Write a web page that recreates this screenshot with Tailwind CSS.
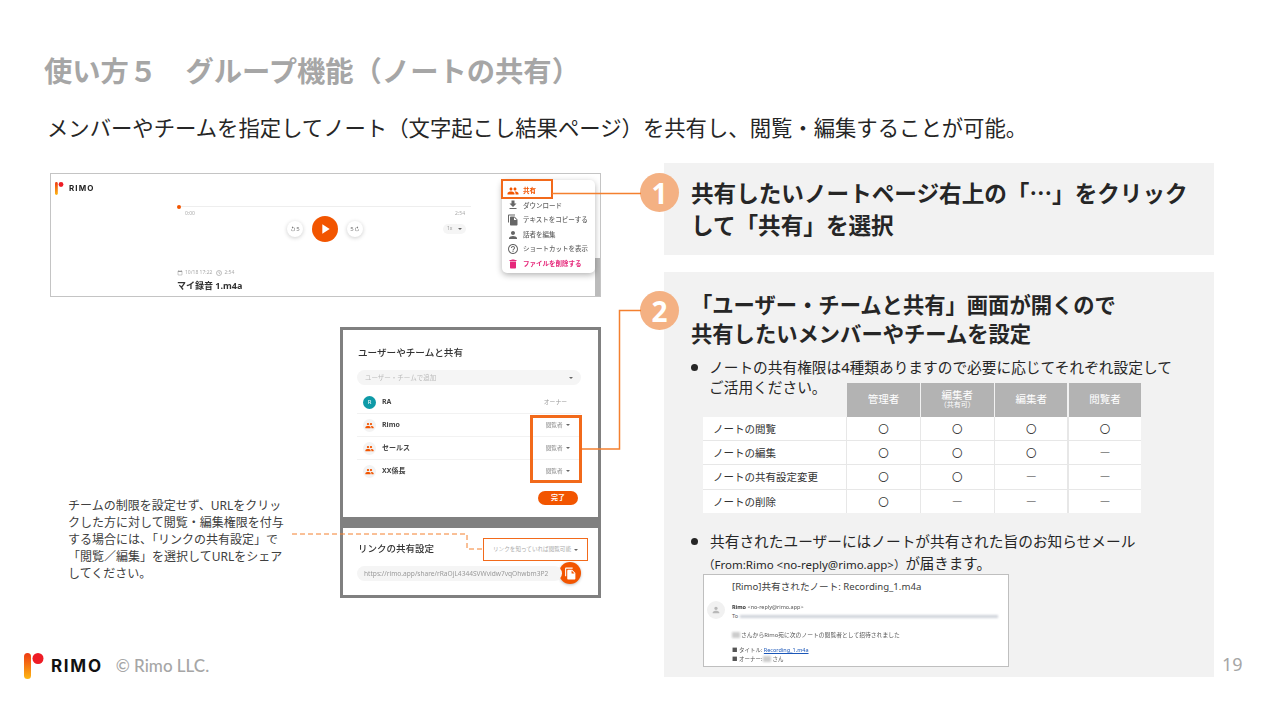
<!DOCTYPE html>
<html lang="ja">
<head>
<meta charset="UTF-8">
<title>使い方5 グループ機能</title>
<script src="https://cdn.jsdelivr.net/npm/@tailwindcss/browser@4"></script>
</head>
<body class="bg-white font-['Noto_Sans','Noto_Sans_CJK_JP',sans-serif]">
<div class="relative w-[1267px] h-[707px] overflow-hidden bg-white">

  <!-- Title -->
  <h1 class="ml-[44px] mt-[51px] h-[40px] text-[28.3px] leading-[40px] font-bold text-[#a6a6a6] whitespace-nowrap">使い方５　グループ機能（ノートの共有）</h1>
  <p class="ml-[47px] mt-[21px] h-[32px] text-[21.35px] leading-[32px] text-[#262626] whitespace-nowrap">メンバーやチームを指定してノート（文字起こし結果ページ）を共有し、閲覧・編集することが可能。</p>

  <div class="mt-[19px] flex h-[544px]">

    <!-- Left column -->
    <div class="w-[664px] pl-[50px] flex flex-col shrink-0">

      <!-- Player screenshot -->
      <div class="relative mt-[10px] w-[551px] h-[124px] border border-[#c4c4c4] bg-white overflow-hidden">
        <div class="blur-[0.3px]">
          <div class="flex items-center gap-[5px] h-[14px] mt-[7px] ml-[4px]">
            <svg width="9" height="13" viewBox="0 0 9 13"><defs><linearGradient id="lg1" x1="0" y1="0" x2="0" y2="1"><stop offset="0" stop-color="#ee3a12"/><stop offset="1" stop-color="#fdb813"/></linearGradient></defs><rect x="0" y="0" width="2.8" height="13" rx="1.4" fill="url(#lg1)"/><circle cx="6" cy="2.5" r="2.4" fill="#ee1c25"/></svg>
            <span class="font-['Inter',sans-serif] text-[8px] font-bold tracking-[1.1px] text-[#222]">RIMO</span>
          </div>
          <div class="ml-[128px] w-[292px] mt-[11px]">
            <div class="relative h-[1px] mt-[1px] bg-[#eeeeee]"><span class="absolute -left-[2px] -top-[1.5px] size-[4px] rounded-full bg-[#f25500]"></span></div>
            <div class="flex justify-between px-[6px] mt-[2px] h-[8px] text-[5px] leading-[8px] text-[#aaa]"><span>0:00</span><span>2:54</span></div>
            <div class="grid grid-cols-[1fr_auto_1fr] items-center -mt-[1px]">
              <span></span>
              <div class="flex items-center gap-[9px]">
                <span class="flex items-center justify-center size-[16px] rounded-full bg-white shadow-[0_1px_4px_rgba(0,0,0,0.2)] text-[6px] text-[#777]"><svg width="6" height="6" viewBox="0 0 24 24" fill="#777"><path d="M12 5V1L7 6l5 5V7c3.31 0 6 2.69 6 6s-2.69 6-6 6-6-2.69-6-6H4c0 4.42 3.58 8 8 8s8-3.58 8-8-3.58-8-8-8z"/></svg>5</span>
                <span class="flex items-center justify-center size-[26px] rounded-full bg-[#f25500]"><svg width="16" height="16" viewBox="0 0 24 24" fill="#fff"><path d="M8 5v14l11-7z"/></svg></span>
                <span class="flex items-center justify-center size-[16px] rounded-full bg-white shadow-[0_1px_4px_rgba(0,0,0,0.2)] text-[6px] text-[#777]">5<svg class="-scale-x-100" width="6" height="6" viewBox="0 0 24 24" fill="#777"><path d="M12 5V1L7 6l5 5V7c3.31 0 6 2.69 6 6s-2.69 6-6 6-6-2.69-6-6H4c0 4.42 3.58 8 8 8s8-3.58 8-8-3.58-8-8-8z"/></svg></span>
              </div>
              <span class="justify-self-end mr-[5px] flex items-center justify-between w-[23px] h-[10px] px-[4px] rounded-full bg-[#f5f5f5] text-[5px] text-[#999]">1x<i class="border-x-[2px] border-t-[2.5px] border-x-transparent border-t-[#666]"></i></span>
            </div>
          </div>
          <div class="ml-[126px] mt-[27px] flex items-center h-[8px] text-[5px] text-[#aaa]">
            <svg width="6" height="6" viewBox="0 0 24 24" fill="#999"><path d="M19 3h-1V1h-2v2H8V1H6v2H5c-1.1 0-2 .9-2 2v14c0 1.1.9 2 2 2h14c1.1 0 2-.9 2-2V5c0-1.1-.9-2-2-2zm0 16H5V8h14v11z"/></svg>
            <span class="ml-[2px]">10/18 17:22</span>
            <svg class="ml-[4px]" width="6" height="6" viewBox="0 0 24 24" fill="none" stroke="#999" stroke-width="2.5"><circle cx="12" cy="12" r="10"/><path d="M12 6v6l4 3"/></svg>
            <span class="ml-[2px]">2:54</span>
          </div>
          <div class="ml-[126px] mt-[3px] text-[9px] leading-[12px] font-bold text-[#333]">マイ録音 1.m4a</div>
        </div>

        <!-- scrollbar behind the menu -->
        <div class="absolute right-0 top-[84px] w-[5px] h-[40px] bg-[#bbbbbb]"></div>

        <!-- Context menu -->
        <div class="absolute left-[451px] top-[6px] w-[93px] h-[93px] pt-[3.5px] rounded-[5px] bg-white shadow-[0_2px_6px_rgba(0,0,0,0.3)] text-[6.5px] font-medium text-[#666] blur-[0.25px]">
          <div class="flex items-center gap-[4px] pl-[5px] h-[14.6px] font-bold text-[#f25500]"><svg width="12" height="12" viewBox="0 0 24 24" fill="#f25500"><path d="M16 11c1.66 0 2.99-1.34 2.99-3S17.66 5 16 5c-1.66 0-3 1.34-3 3s1.34 3 3 3zm-8 0c1.66 0 2.99-1.34 2.99-3S9.66 5 8 5C6.34 5 5 6.34 5 8s1.34 3 3 3zm0 2c-2.33 0-7 1.17-7 3.5V19h14v-2.5c0-2.33-4.67-3.5-7-3.5zm8 0c-.29 0-.62.02-.97.05 1.16.84 1.97 1.97 1.97 3.45V19h6v-2.5c0-2.33-4.67-3.5-7-3.5z"/></svg>共有</div>
          <div class="flex items-center gap-[4px] pl-[5px] h-[14.6px]"><svg width="12" height="12" viewBox="0 0 24 24" fill="#666"><path d="M19 9h-4V3H9v6H5l7 7 7-7zM5 18v2h14v-2H5z"/></svg>ダウンロード</div>
          <div class="flex items-center gap-[4px] pl-[5px] h-[14.6px]"><svg width="12" height="12" viewBox="0 0 24 24" fill="#666"><path d="M16 1H4c-1.1 0-2 .9-2 2v14h2V3h12V1zm-1 4l6 6v10c0 1.1-.9 2-2 2H7.99C6.89 23 6 22.1 6 21l.01-14c0-1.1.89-2 1.99-2h7zm-1 7h5.5L14 6.5V12z"/></svg>テキストをコピーする</div>
          <div class="flex items-center gap-[4px] pl-[5px] h-[14.6px]"><svg width="12" height="12" viewBox="0 0 24 24" fill="#666"><path d="M12 12c2.21 0 4-1.79 4-4s-1.79-4-4-4-4 1.79-4 4 1.79 4 4 4zm0 2c-2.67 0-8 1.34-8 4v2h16v-2c0-2.66-5.33-4-8-4z"/></svg>話者を編集</div>
          <div class="flex items-center gap-[4px] pl-[5px] h-[14.6px]"><svg width="12" height="12" viewBox="0 0 24 24" fill="#666"><path d="M11 18h2v-2h-2v2zm1-16C6.48 2 2 6.48 2 12s4.48 10 10 10 10-4.48 10-10S17.52 2 12 2zm0 18c-4.41 0-8-3.59-8-8s3.59-8 8-8 8 3.59 8 8-3.59 8-8 8zm0-14c-2.21 0-4 1.79-4 4h2c0-1.1.9-2 2-2s2 .9 2 2c0 2-3 1.75-3 5h2c0-2.25 3-2.5 3-5 0-2.21-1.79-4-4-4z"/></svg>ショートカットを表示</div>
          <div class="flex items-center gap-[4px] pl-[5px] h-[14.6px] font-bold text-[#e6277a]"><svg width="12" height="12" viewBox="0 0 24 24" fill="#e6277a"><path d="M6 19c0 1.1.9 2 2 2h8c1.1 0 2-.9 2-2V7H6v12zM19 4h-3.5l-1-1h-5l-1 1H5v2h14V4z"/></svg>ファイルを削除する</div>
        </div>
        <div class="absolute left-[450px] top-[5px] w-[52px] h-[20px] border-2 border-[#f26a1b]"></div>
      </div>

      <div class="flex mt-[30px]">
        <!-- Note -->
        <p class="ml-[18px] mt-[170px] w-[218px] text-[12px] leading-[17px] text-[#404040] h-fit">チームの制限を設定せず、URLをクリックした方に対して閲覧・編集権限を付与する場合には、「リンクの共有設定」で「閲覧／編集」を選択してURLをシェアしてください。</p>

        <!-- Share dialog screenshot -->
        <div class="ml-[54px] w-[261px] h-[271px] p-[3px] bg-[#808080] flex flex-col gap-[11px] shrink-0">
          <div class="relative h-[187px] bg-white flex flex-col pt-[17px] pl-[14px]">
            <div class="pl-px h-[12px] text-[9.6px] leading-[12px] font-medium text-[#333] blur-[0.25px]">ユーザーやチームと共有</div>
            <div class="mt-[11px] w-[224px] h-[15px] rounded-full bg-[#f5f5f5] flex items-center justify-between px-[8px] text-[6.5px] text-[#bbb] blur-[0.25px]">ユーザー・チームで追加<i class="border-x-[2px] border-t-[2.5px] border-x-transparent border-t-[#666]"></i></div>
            <div class="mt-[6px] w-[224px] text-[7px] font-bold text-[#444] blur-[0.25px]">
              <div class="h-[23px] flex items-center justify-between pl-[6px] pr-[14px] border-b border-[#f2f2f2]">
                <span class="flex items-center gap-[6px]"><span class="flex items-center justify-center size-[13px] rounded-full bg-[#0e9aa7] text-white text-[6px] font-normal">R</span>RA</span>
                <span class="font-normal text-[5.8px] text-[#999]">オーナー</span>
              </div>
              <div class="h-[23px] flex items-center justify-between pl-[6px] pr-[11px] border-b border-[#f2f2f2]">
                <span class="flex items-center gap-[6px]"><span class="flex items-center justify-center size-[13px] rounded-full bg-[#f3f3f3]"><svg width="9" height="9" viewBox="0 0 24 24" fill="#f25500"><path d="M16 11c1.66 0 2.99-1.34 2.99-3S17.66 5 16 5c-1.66 0-3 1.34-3 3s1.34 3 3 3zm-8 0c1.66 0 2.99-1.34 2.99-3S9.66 5 8 5C6.34 5 5 6.34 5 8s1.34 3 3 3zm0 2c-2.33 0-7 1.17-7 3.5V19h14v-2.5c0-2.33-4.67-3.5-7-3.5zm8 0c-.29 0-.62.02-.97.05 1.16.84 1.97 1.97 1.97 3.45V19h6v-2.5c0-2.33-4.67-3.5-7-3.5z"/></svg></span>Rimo</span>
                <span class="flex items-center gap-[3.5px] text-[5.6px] font-normal text-[#888]">閲覧者<i class="border-x-[2px] border-t-[2.5px] border-x-transparent border-t-[#666]"></i></span>
              </div>
              <div class="h-[23px] flex items-center justify-between pl-[6px] pr-[11px] border-b border-[#f2f2f2]">
                <span class="flex items-center gap-[6px]"><span class="flex items-center justify-center size-[13px] rounded-full bg-[#f3f3f3]"><svg width="9" height="9" viewBox="0 0 24 24" fill="#f25500"><path d="M16 11c1.66 0 2.99-1.34 2.99-3S17.66 5 16 5c-1.66 0-3 1.34-3 3s1.34 3 3 3zm-8 0c1.66 0 2.99-1.34 2.99-3S9.66 5 8 5C6.34 5 5 6.34 5 8s1.34 3 3 3zm0 2c-2.33 0-7 1.17-7 3.5V19h14v-2.5c0-2.33-4.67-3.5-7-3.5zm8 0c-.29 0-.62.02-.97.05 1.16.84 1.97 1.97 1.97 3.45V19h6v-2.5c0-2.33-4.67-3.5-7-3.5z"/></svg></span>セールス</span>
                <span class="flex items-center gap-[3.5px] text-[5.6px] font-normal text-[#888]">閲覧者<i class="border-x-[2px] border-t-[2.5px] border-x-transparent border-t-[#666]"></i></span>
              </div>
              <div class="h-[23px] flex items-center justify-between pl-[6px] pr-[11px]">
                <span class="flex items-center gap-[6px]"><span class="flex items-center justify-center size-[13px] rounded-full bg-[#f3f3f3]"><svg width="9" height="9" viewBox="0 0 24 24" fill="#f25500"><path d="M16 11c1.66 0 2.99-1.34 2.99-3S17.66 5 16 5c-1.66 0-3 1.34-3 3s1.34 3 3 3zm-8 0c1.66 0 2.99-1.34 2.99-3S9.66 5 8 5C6.34 5 5 6.34 5 8s1.34 3 3 3zm0 2c-2.33 0-7 1.17-7 3.5V19h14v-2.5c0-2.33-4.67-3.5-7-3.5zm8 0c-.29 0-.62.02-.97.05 1.16.84 1.97 1.97 1.97 3.45V19h6v-2.5c0-2.33-4.67-3.5-7-3.5z"/></svg></span>XX係長</span>
                <span class="flex items-center gap-[3.5px] text-[5.6px] font-normal text-[#888]">閲覧者<i class="border-x-[2px] border-t-[2.5px] border-x-transparent border-t-[#666]"></i></span>
              </div>
            </div>
            <div class="mt-[8px] self-end mr-[20px] w-[40px] h-[14px] rounded-full bg-[#f25500] text-white text-[7px] font-bold flex items-center justify-center">完了</div>
            <div class="absolute left-[187px] top-[85px] w-[52px] h-[68px] border-[3px] border-[#f26a1b]"></div>
          </div>
          <div class="h-[67px] bg-white pl-[14px] pr-[10px] pt-[10px]">
            <div class="flex items-center justify-between">
              <span class="pl-px text-[9.5px] font-medium text-[#333] blur-[0.25px]">リンクの共有設定</span>
              <span class="w-[105px] h-[23px] border border-[#f26a1b] flex items-center justify-between pl-[9px] pr-[9px] text-[5.6px] text-[#aaa] whitespace-nowrap">リンクを知っていれば閲覧可能<i class="border-x-[2px] border-t-[2.5px] border-x-transparent border-t-[#666]"></i></span>
            </div>
            <div class="flex items-center mt-px">
              <span class="w-[205px] h-[15px] rounded-full bg-[#f5f5f5] pl-[7px] text-[6.6px] leading-[15px] text-[#999] whitespace-nowrap overflow-hidden blur-[0.25px]">https://rimo.app/share/rRaOjL4344SVWvidw7vqOhwbm3P2</span>
              <span class="-ml-[3px] size-[22px] rounded-full bg-[#f25500] flex items-center justify-center shadow-[0_1px_3px_rgba(0,0,0,0.25)]"><svg width="13" height="13" viewBox="0 0 24 24" fill="#fff"><path d="M16 1H4c-1.1 0-2 .9-2 2v14h2V3h12V1zm-1 4l6 6v10c0 1.1-.9 2-2 2H7.99C6.89 23 6 22.1 6 21l.01-14c0-1.1.89-2 1.99-2h7zm-1 7h5.5L14 6.5V12z"/></svg></span>
            </div>
          </div>
        </div>
      </div>

      <!-- Footer -->
      <div class="-ml-[26px] mt-[55px] flex items-center h-[26px]">
        <svg width="20" height="26" viewBox="0 0 20 26"><defs><linearGradient id="lg2" x1="0" y1="0" x2="0" y2="1"><stop offset="0" stop-color="#ee3a12"/><stop offset="1" stop-color="#fdb813"/></linearGradient></defs><rect x="0" y="0" width="7" height="26" rx="3.5" fill="url(#lg2)"/><circle cx="14" cy="5.5" r="5.5" fill="#ee1c25"/></svg>
        <span class="ml-[7px] font-['Inter',sans-serif] text-[17px] font-bold tracking-[1.7px] text-[#111] leading-none">RIMO</span>
        <span class="ml-[13px] font-['Lato',sans-serif] text-[17px] font-medium text-[#a6a6a6] whitespace-nowrap">© Rimo LLC.</span>
      </div>
    </div>

    <!-- Right column -->
    <div class="w-[550px] shrink-0 flex flex-col gap-[17px]">
      <div class="relative h-[92px] bg-[#f2f2f2] pl-[27px] pt-[14px] text-[22.6px] leading-[32px] font-bold text-[#262626] whitespace-nowrap">
        <span class="absolute -left-[24px] top-[10px] size-[39px] rounded-full bg-[#f4b183] flex items-center justify-center text-white text-[28px] font-bold">1</span>
        共有したいノートページ右上の「<span class="font-['Noto_Sans_CJK_JP',sans-serif]">…</span>」をクリック<br>して「共有」を選択
      </div>
      <div class="relative h-[405px] bg-[#f2f2f2] pt-[18px]">
        <span class="absolute -left-[24px] top-[19px] size-[39px] rounded-full bg-[#f4b183] flex items-center justify-center text-white text-[28px] font-bold">2</span>
        <div class="pl-[27px] text-[21.3px] leading-[29px] font-bold text-[#262626] whitespace-nowrap">「ユーザー・チームと共有」画面が開くので<br>共有したいメンバーやチームを設定</div>

        <div class="mt-[8.5px] ml-[27px] flex gap-[11px] text-[14.7px] leading-[20px] text-[#262626]">
          <span class="mt-[7px] size-[7px] rounded-full bg-[#262626] shrink-0"></span>
          <p class="whitespace-nowrap">ノートの共有権限は4種類ありますので必要に応じてそれぞれ設定して<br>ご活用ください。</p>
        </div>

        <!-- Permission table -->
        <div class="relative -mt-[14px] ml-[39px] w-[438px] text-[10.5px]">
          <div class="grid grid-cols-[143px_repeat(4,72.5px)] gap-x-[1.3px] h-[34px] text-white text-center">
            <span></span>
            <span class="bg-[#b3b3b3] flex items-center justify-center">管理者</span>
            <span class="bg-[#b3b3b3] flex flex-col items-center justify-center leading-[11px]">編集者<span class="text-[7px] leading-[8px]">（共有可）</span></span>
            <span class="bg-[#b3b3b3] flex items-center justify-center">編集者</span>
            <span class="bg-[#b3b3b3] flex items-center justify-center">閲覧者</span>
          </div>
          <div class="grid grid-cols-[143px_repeat(4,72.5px)] auto-rows-[23.2px] gap-[1.3px] bg-[#e7e7e7] text-[#333] text-center font-['Noto_Sans_CJK_JP',sans-serif]">
            <span class="bg-white text-left pl-[10px] leading-[24px]">ノートの閲覧</span><span class="bg-white leading-[24px]">〇</span><span class="bg-white leading-[24px]">〇</span><span class="bg-white leading-[24px]">〇</span><span class="bg-white leading-[24px]">〇</span>
            <span class="bg-white text-left pl-[10px] leading-[24px]">ノートの編集</span><span class="bg-white leading-[24px]">〇</span><span class="bg-white leading-[24px]">〇</span><span class="bg-white leading-[24px]">〇</span><span class="bg-white leading-[24px] font-medium">―</span>
            <span class="bg-white text-left pl-[10px] leading-[24px]">ノートの共有設定変更</span><span class="bg-white leading-[24px]">〇</span><span class="bg-white leading-[24px]">〇</span><span class="bg-white leading-[24px] font-medium">―</span><span class="bg-white leading-[24px] font-medium">―</span>
            <span class="bg-white text-left pl-[10px] leading-[24px]">ノートの削除</span><span class="bg-white leading-[24px]">〇</span><span class="bg-white leading-[24px] font-medium">―</span><span class="bg-white leading-[24px] font-medium">―</span><span class="bg-white leading-[24px] font-medium">―</span>
          </div>
        </div>

        <div class="mt-[17px] ml-[27px] h-[22px] flex gap-[12px] text-[14.7px] leading-[23px] text-[#262626] whitespace-nowrap">
          <span class="mt-[8px] size-[7px] rounded-full bg-[#262626] shrink-0"></span>
          <p>共有されたユーザーにはノートが共有された旨のお知らせメール</p>
        </div>
        <p class="ml-[39px] h-[22px] text-[14.5px] leading-[23px] text-[#262626] whitespace-nowrap"><span class="text-[11.5px]">（From:Rimo &lt;no-reply@rimo.app&gt;）</span>が届きます。</p>

        <!-- Mail screenshot -->
        <div class="ml-[39px] w-[306px] h-[93px] border border-[#bfbfbf] bg-white pl-[28px] relative text-[5.5px] text-[#555]">
          <div class="mt-[3px] h-[17px] text-[9.6px] leading-[17px] text-[#404040] whitespace-nowrap">[Rimo]共有されたノート: Recording_1.m4a</div>
          <span class="absolute left-[3px] top-[26px] size-[18px] rounded-full bg-[#f1f1f1] flex items-center justify-center"><svg width="10" height="10" viewBox="0 0 24 24" fill="#b8b8b8"><path d="M12 12c2.21 0 4-1.79 4-4s-1.79-4-4-4-4 1.79-4 4 1.79 4 4 4zm0 2c-2.67 0-8 1.34-8 4v2h16v-2c0-2.66-5.33-4-8-4z"/></svg></span>
          <div class="mt-[8px] h-[8px] leading-[8px] blur-[0.3px]"><b class="text-[#333]">Rimo</b> &lt;no-reply@rimo.app&gt;</div>
          <div class="mt-[1px] h-[8px] leading-[8px] flex items-center gap-[2px]">To<span class="w-[258px] h-[3px] bg-[#cfd3da] blur-[1px]"></span></div>
          <div class="mt-[11px] h-[8px] leading-[8px] whitespace-nowrap flex items-center blur-[0.3px] text-[5.8px]"><span class="w-[8px] h-[6px] bg-[#ccc] blur-[1px] mr-px"></span>さんからRimo宛に次のノートの閲覧者として招待されました</div>
          <div class="mt-[7px] h-[8px] leading-[8px] whitespace-nowrap blur-[0.3px]">■ タイトル: <span class="text-[#1a56b8] underline">Recording_1.m4a</span></div>
          <div class="mt-px h-[8px] leading-[8px] whitespace-nowrap flex items-center blur-[0.3px]">■ オーナー: <span class="w-[8px] h-[6px] bg-[#ccc] blur-[1px] mx-px"></span>さん</div>
        </div>
      </div>
    </div>

    <!-- Page number -->
    <div class="ml-[8px] pt-[489px] text-[18px] leading-[24px] text-[#a6a6a6]">19</div>
  </div>

  <!-- Connectors -->
  <svg class="absolute inset-0 pointer-events-none" width="1267" height="707" fill="none">
    <path d="M552 193.5H641" stroke="#f4802f" stroke-width="1.5"/>
    <path d="M641 310.5H619.5V449H582" stroke="#f4802f" stroke-width="1.5"/>
    <path d="M292 534H467V549H483" stroke="#f4802f" stroke-width="1" stroke-dasharray="5 3"/>
  </svg>
</div>
</body>
</html>
